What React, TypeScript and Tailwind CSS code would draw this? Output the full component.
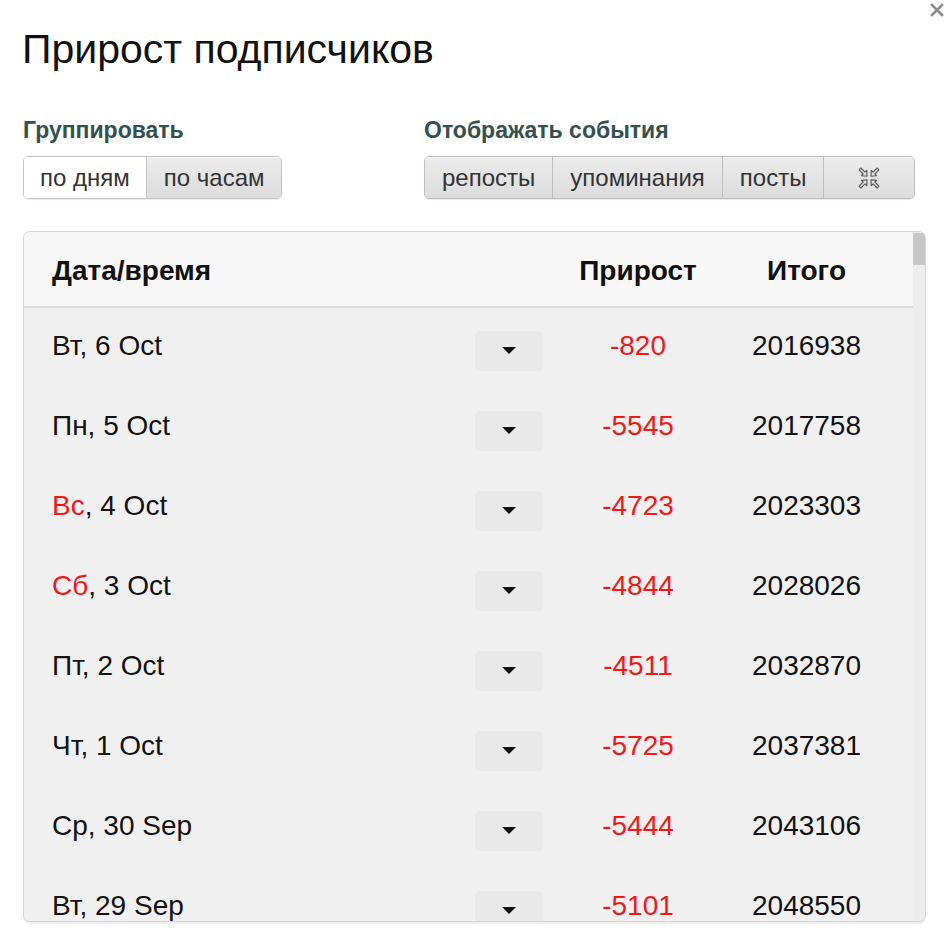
import React from 'react'

interface Row {
  day: string
  weekend?: boolean
  date: string
  delta: string
  total: string
}

const rows: Row[] = [
  { day: 'Вт', date: '6 Oct', delta: '-820', total: '2016938' },
  { day: 'Пн', date: '5 Oct', delta: '-5545', total: '2017758' },
  { day: 'Вс', weekend: true, date: '4 Oct', delta: '-4723', total: '2023303' },
  { day: 'Сб', weekend: true, date: '3 Oct', delta: '-4844', total: '2028026' },
  { day: 'Пт', date: '2 Oct', delta: '-4511', total: '2032870' },
  { day: 'Чт', date: '1 Oct', delta: '-5725', total: '2037381' },
  { day: 'Ср', date: '30 Sep', delta: '-5444', total: '2043106' },
  { day: 'Вт', date: '29 Sep', delta: '-5101', total: '2048550' },
]

const segBase =
  'h-[41px] flex items-center justify-center text-[24px] text-[#333] leading-none'
const segGray =
  'bg-gradient-to-b from-[#ececec] to-[#dcdcdc] shadow-[inset_0_1px_0_#f6f6f6]'

// hollow arrow pointing along +x, centred on origin
const arrow = '-5,-1.3 0.8,-1.3 0.8,-3.8 5,0 0.8,3.8 0.8,1.3 -5,1.3'

function CompressIcon() {
  return (
    <svg width="26" height="24" viewBox="0 0 26 24" fill="none" stroke="#5c5c5c" strokeWidth="1.2" strokeLinejoin="round">
      <polygon points={arrow} transform="translate(7.5 6.5) rotate(45)" />
      <polygon points={arrow} transform="translate(18.5 6.5) rotate(135)" />
      <polygon points={arrow} transform="translate(7.5 17.5) rotate(-45)" />
      <polygon points={arrow} transform="translate(18.5 17.5) rotate(-135)" />
    </svg>
  )
}

export default function App() {
  return (
    <div className="relative w-[950px] h-[944px] bg-white overflow-hidden font-['Liberation_Sans',Arial,sans-serif]">
      {/* Close */}
      <button className="absolute left-[930px] top-[3px]">
        <svg width="14" height="14" viewBox="0 0 14 14" stroke="#8c8c8c" strokeWidth="2.6" strokeLinecap="square">
          <path d="M2 2 L12 12 M12 2 L2 12" />
        </svg>
      </button>

      <div className="pl-[22px] pt-[25px]">
        <h1 className="text-[41px] leading-[48px] text-[#111]">Прирост подписчиков</h1>

        {/* Filters */}
        <div className="flex mt-[43px]">
          <div className="w-[402px]">
            <div className="text-[23px] font-bold leading-[28px] text-[#34504f] pl-[1px]">Группировать</div>
            <div className="mt-[12px] ml-[1px] inline-flex rounded-[5px] border border-[#c4c4c4] overflow-hidden shadow-[0_1px_1px_rgba(0,0,0,0.08)]">
              <span className={`${segBase} bg-white px-[16px]`}>по дням</span>
              <span className={`${segBase} ${segGray} border-l border-[#c4c4c4] px-[17px]`}>по часам</span>
            </div>
          </div>
          <div>
            <div className="text-[23px] font-bold leading-[28px] text-[#34504f]">Отображать события</div>
            <div className="mt-[12px] inline-flex rounded-[5px] border border-[#bdbdbd] overflow-hidden shadow-[0_1px_1px_rgba(0,0,0,0.08)]">
              <span className={`${segBase} ${segGray} px-[17px]`}>репосты</span>
              <span className={`${segBase} ${segGray} border-l border-[#bdbdbd] px-[17px]`}>упоминания</span>
              <span className={`${segBase} ${segGray} border-l border-[#bdbdbd] px-[17px]`}>посты</span>
              <span className={`${segBase} ${segGray} border-l border-[#bdbdbd] w-[91px]`}>
                <CompressIcon />
              </span>
            </div>
          </div>
        </div>

        {/* Table */}
        <div className="mt-[32px] ml-[1px] w-[903px] h-[691px] rounded-[7px] border border-[#d6d6d6] bg-[#f0f0f0] overflow-hidden flex shadow-[0_2px_2px_rgba(0,0,0,0.08)]">
          <div className="flex-1 flex flex-col">
            <div className="h-[76px] shrink-0 bg-[#f7f7f7] border-b-2 border-[#dedede] grid grid-cols-[423px_68px_190px_147px] items-center pl-[28px] pt-[3px] text-[28px] font-bold text-[#111]">
              <span>Дата/время</span>
              <span />
              <span className="text-center">Прирост</span>
              <span className="text-center">Итого</span>
            </div>
            {rows.map((r, i) => (
              <div
                key={i}
                className="h-[80px] shrink-0 grid grid-cols-[423px_68px_190px_147px] items-center pl-[28px] text-[28px] text-[#111]"
              >
                <span className="-mt-[4px]">
                  <span className={r.weekend ? 'text-[#f01818]' : ''}>{r.day}</span>, {r.date}
                </span>
                <span className="mt-[6px] h-[40px] rounded-[5px] bg-[#e9e9e9] flex items-center justify-center">
                  <svg width="16" height="8" viewBox="0 0 16 8">
                    <path d="M1 0 L15 0 L8 7 Z" fill="#111" />
                  </svg>
                </span>
                <span className="-mt-[4px] text-center text-[#f01818]">{r.delta}</span>
                <span className="-mt-[4px] text-center">{r.total}</span>
              </div>
            ))}
          </div>
          {/* scrollbar */}
          <div className="w-[12px] shrink-0 bg-[#ededed] flex flex-col">
            <div className="h-[32px] mt-[1px] bg-[#c7c7c7]" />
          </div>
        </div>
      </div>
    </div>
  )
}
